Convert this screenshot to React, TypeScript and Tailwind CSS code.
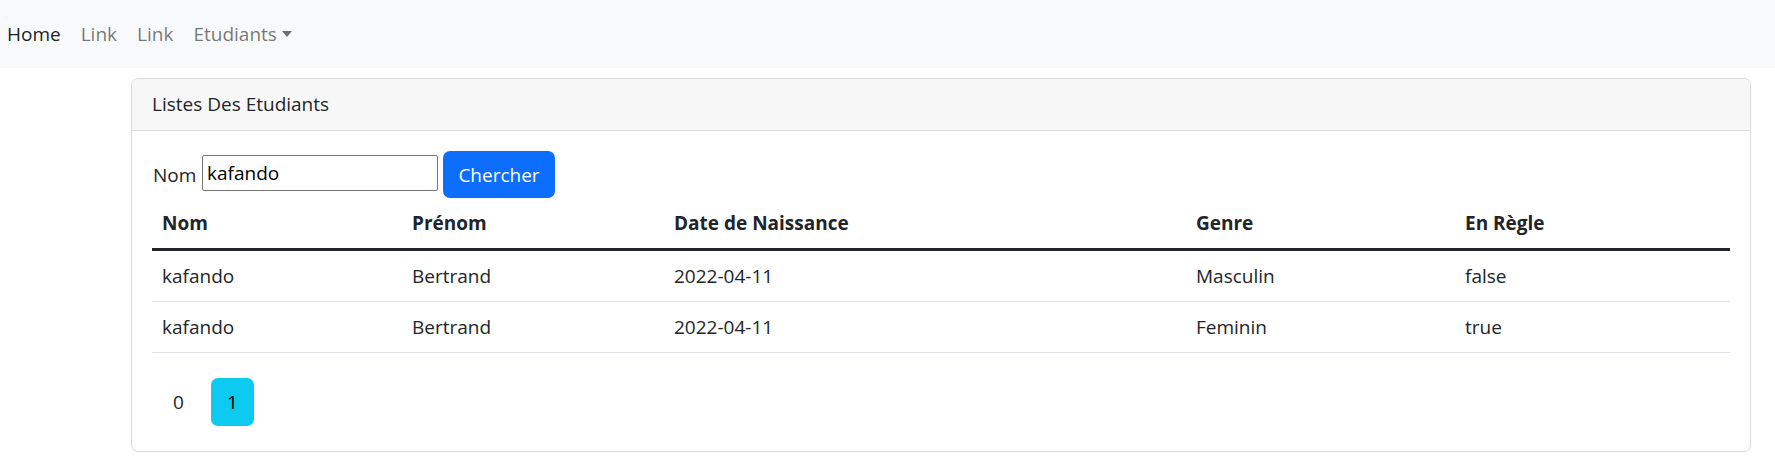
const students = [
  { nom: "kafando", prenom: "Bertrand", date: "2022-04-11", genre: "Masculin", enRegle: "false" },
  { nom: "kafando", prenom: "Bertrand", date: "2022-04-11", genre: "Feminin", enRegle: "true" },
];

const columns = [
  { label: "Nom", width: "w-[250px]" },
  { label: "Prénom", width: "w-[262px]" },
  { label: "Date de Naissance", width: "w-[522px]" },
  { label: "Genre", width: "w-[269px]" },
  { label: "En Règle", width: "w-[275px]" },
];

export default function App() {
  return (
    <div className="min-h-[456px] bg-white font-['Segoe_UI','Open_Sans',sans-serif] text-[19px] leading-[30px] text-[#212529]">
      <nav className="flex h-[68px] items-center gap-[20px] bg-[#f8f9fa] pl-[7px]">
        <a className="text-black/90">Home</a>
        <a className="text-black/55">Link</a>
        <a className="text-black/55">Link</a>
        <a className="flex items-center text-black/55">
          Etudiants
          <span className="ml-[5px] inline-block h-0 w-0 border-x-[5px] border-t-[6px] border-x-transparent border-t-[#6c6c6c]" />
        </a>
      </nav>

      <div className="ml-[131px] mt-[10px] w-[1620px] rounded-[7px] border border-[#dadada]">
        <div className="rounded-t-[7px] border-b border-[#dadada] bg-[#f7f7f7] px-[20px] pb-[11px] pt-[10px]">
          Listes Des Etudiants
        </div>

        <div className="px-[20px] pb-[25px] pt-[20px]">
          <form className="flex h-[47px] items-center">
            <label className="w-[50px] pl-[1px]">Nom</label>
            <input
              defaultValue="kafando"
              className="mb-[4px] h-[36px] w-[236px] rounded-[2px] border border-[#767676] px-[4px] text-[19px] text-black outline-none"
            />
            <button
              type="button"
              className="ml-[5px] h-[47px] w-[112px] rounded-[7px] bg-[#0d6efd] text-white"
            >
              Chercher
            </button>
          </form>

          <table className="w-[1578px] table-fixed border-collapse text-left">
            <thead>
              <tr className="border-b-[3px] border-[#212529]">
                {columns.map((col) => (
                  <th key={col.label} className={`${col.width} px-[10px] py-[10px] font-bold`}>
                    {col.label}
                  </th>
                ))}
              </tr>
            </thead>
            <tbody>
              {students.map((s, i) => (
                <tr key={i} className="border-b border-[#dee2e6]">
                  <td className="px-[10px] py-[10px]">{s.nom}</td>
                  <td className="px-[10px] py-[10px]">{s.prenom}</td>
                  <td className="px-[10px] py-[10px]">{s.date}</td>
                  <td className="px-[10px] py-[10px]">{s.genre}</td>
                  <td className="px-[10px] py-[10px]">{s.enRegle}</td>
                </tr>
              ))}
            </tbody>
          </table>

          <div className="ml-[5px] mt-[25px] flex gap-[11px]">
            <button type="button" className="h-[48px] w-[43px] rounded-[7px] text-[#212529]">
              0
            </button>
            <button type="button" className="h-[48px] w-[43px] rounded-[7px] bg-[#0dcaf0] text-black">
              1
            </button>
          </div>
        </div>
      </div>
    </div>
  );
}
